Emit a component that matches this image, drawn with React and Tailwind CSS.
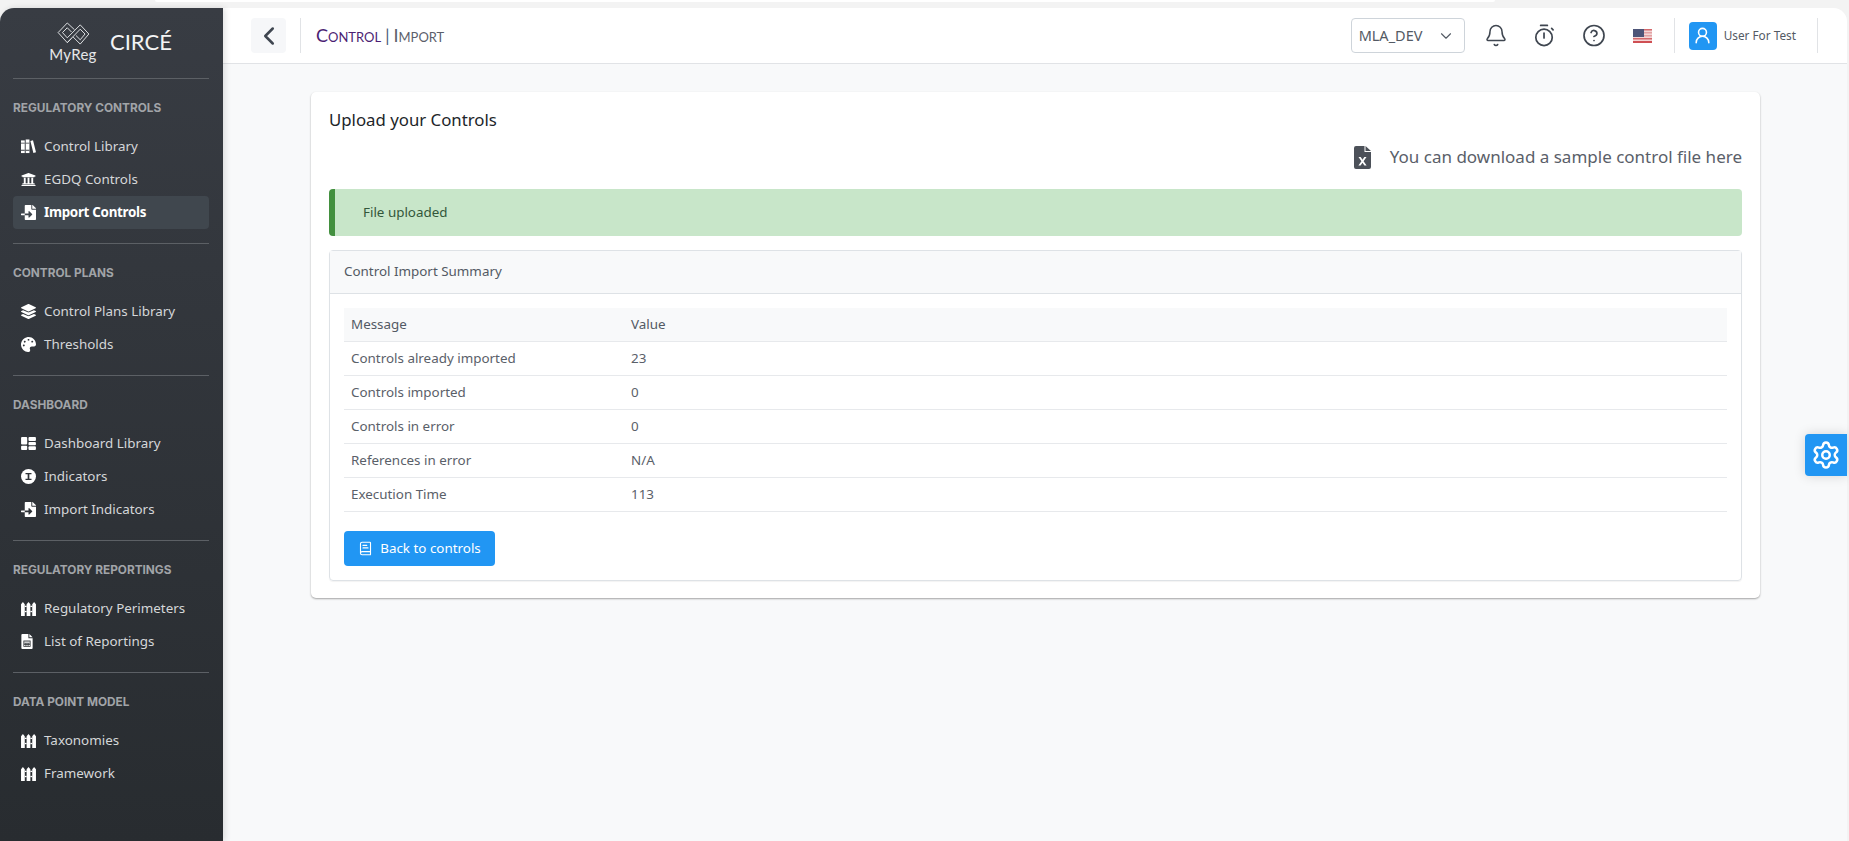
import { FaFileImport, FaLayerGroup, FaPalette, FaUniversity } from 'react-icons/fa'
import { Bell, BookText, ChevronDown, ChevronLeft, CircleHelp, Settings, UserRound } from 'lucide-react'

function BooksIcon() {
  return (
    <svg viewBox="0 0 16 16" className="w-[15px] h-[15px]" fill="currentColor">
      <rect x="0" y="1.500" width="4" height="13.500" />
      <rect x="5" y="0.500" width="4" height="14.500" />
      <path d="M10 2l2.800-.8 3.200 13-2.800.8z" />
      <path d="M0 4h4v.9H0zM5 4h4v.9H5zM0 11.500h4v.9H0zM5 11.500h4v.9H5z" fill="#363a40" />
    </svg>
  )
}

function FenceIcon() {
  return (
    <svg viewBox="0 0 16 15" className="w-[15px] h-[14px]" fill="currentColor">
      <path d="M0 2.500L2 0l2 2.500V15H0zM6 2.500L8 0l2 2.500V15H6zM12 2.500L14 0l2 2.500V15h-4z" />
      <rect x="4" y="4" width="2" height="1.400" />
      <rect x="10" y="4" width="2" height="1.400" />
      <rect x="4" y="9.500" width="2" height="1.400" />
      <rect x="10" y="9.500" width="2" height="1.400" />
    </svg>
  )
}

function TilesIcon() {
  return (
    <svg viewBox="0 0 16 14" className="w-[15px] h-[13px]" fill="currentColor">
      <rect x="0" y="0" width="6.600" height="8" rx="1" />
      <rect x="0" y="9.400" width="6.600" height="4.600" rx="1" />
      <rect x="8" y="0" width="8" height="4.200" rx="1" />
      <rect x="8" y="5.400" width="8" height="3.400" rx="1" />
      <rect x="8" y="10" width="8" height="4" rx="1" />
    </svg>
  )
}

function InfoIcon() {
  return (
    <svg viewBox="0 0 16 16" className="w-[15px] h-[15px]">
      <circle cx="8" cy="8" r="8" fill="currentColor" />
      <path d="M4.800 4.200h6.400v1.400H8.900v4.800h2.300v1.400H4.800v-1.400h2.300V5.600H4.800z" fill="#2f3338" />
    </svg>
  )
}

function SheetIcon() {
  return (
    <svg viewBox="0 0 12 16" className="w-[12px] h-[15px]" fill="currentColor">
      <path d="M1 0h6.500v4.500H12V15a1 1 0 0 1-1 1H1a1 1 0 0 1-1-1V1a1 1 0 0 1 1-1zM8.500 0L12 3.500H8.500z" />
      <rect x="2.200" y="7" width="7.600" height="6.600" fill="#2b2f33" />
      <path d="M3 8h6v1.200H3zM3 10h1.400v1H3zM5.300 10h1.400v1H5.300zM7.600 10H9v1H7.600zM3 11.800h1.400v1H3zM5.300 11.800h1.400v1H5.300zM7.600 11.800H9v1H7.600z" />
    </svg>
  )
}

function ExcelFileIcon() {
  return (
    <svg viewBox="0 0 17 23" className="w-[17px] h-[23px]">
      <path d="M2 0h8.500v6H17v15a2 2 0 0 1-2 2H2a2 2 0 0 1-2-2V2a2 2 0 0 1 2-2zM11.500 0L17 5h-5.500z" fill="#4c5159" />
      <path d="M4.500 11h2.200l1.800 2.700L10.300 11h2.200l-2.900 4.200 3 4.300h-2.200l-1.900-2.800-1.900 2.800H4.400l3-4.300z" fill="#fff" />
    </svg>
  )
}

function StopwatchIcon() {
  return (
    <svg viewBox="0 0 22 24" className="w-[21px] h-[23px]" fill="none" stroke="currentColor" strokeWidth="1.800" strokeLinecap="round">
      <circle cx="10.500" cy="14" r="8.600" />
      <path d="M7 1.500h7" />
      <path d="M10.500 9.500v5" />
      <path d="M18.500 4.500l1.500 1.500" />
    </svg>
  )
}

function MyRegLogo() {
  return (
    <svg viewBox="0 0 34 25" className="w-[33px] h-[24px]" fill="none" stroke="#e5e7e9" strokeWidth="1">
      <path d="M18 8L10.500 1 1 11l9.500 10.500L15 17" />
      <path d="M15 10.500L10.500 6 5.500 11l5 5.500L24 3l9 9.500L24 23l-7.500-7.500" />
      <path d="M19.500 14l4.500 4.500 5-6L24 7.500 10.500 21.500" />
    </svg>
  )
}

function UsFlag() {
  return (
    <svg viewBox="0 0 19 14" className="w-[19px] h-[14px]">
      <rect width="19" height="14" fill="#f3d6d6" />
      <rect y="0" width="19" height="1.500" fill="#d4696c" />
      <rect y="3" width="19" height="1.500" fill="#e3a1a3" />
      <rect y="6" width="19" height="1.500" fill="#e3a1a3" />
      <rect y="9" width="19" height="1.500" fill="#d4696c" />
      <rect y="12" width="19" height="2" fill="#cf4f53" />
      <rect width="11" height="8" fill="#4e5578" />
    </svg>
  )
}

const SECTIONS = [
  {
    title: 'REGULATORY CONTROLS',
    height: 'h-[165px] border-b border-[#5c6065]',
    items: [
      { label: 'Control Library', icon: <BooksIcon /> },
      { label: 'EGDQ Controls', icon: <FaUniversity size={15} /> },
      { label: 'Import Controls', icon: <FaFileImport size={15} />, active: true },
    ],
  },
  {
    title: 'CONTROL PLANS',
    height: 'h-[132px] border-b border-[#5c6065]',
    items: [
      { label: 'Control Plans Library', icon: <FaLayerGroup size={15} /> },
      { label: 'Thresholds', icon: <FaPalette size={15} /> },
    ],
  },
  {
    title: 'DASHBOARD',
    height: 'h-[165px] border-b border-[#5c6065]',
    items: [
      { label: 'Dashboard Library', icon: <TilesIcon /> },
      { label: 'Indicators', icon: <InfoIcon /> },
      { label: 'Import Indicators', icon: <FaFileImport size={15} /> },
    ],
  },
  {
    title: 'REGULATORY REPORTINGS',
    height: 'h-[132px] border-b border-[#5c6065]',
    items: [
      { label: 'Regulatory Perimeters', icon: <FenceIcon /> },
      { label: 'List of Reportings', icon: <SheetIcon /> },
    ],
  },
  {
    title: 'DATA POINT MODEL',
    height: '',
    items: [
      { label: 'Taxonomies', icon: <FenceIcon /> },
      { label: 'Framework', icon: <FenceIcon /> },
    ],
  },
]

const ROWS = [
  ['Controls already imported', '23'],
  ['Controls imported', '0'],
  ['Controls in error', '0'],
  ['References in error', 'N/A'],
  ['Execution Time', '113'],
]

function Sidebar() {
  return (
    <aside className="w-[223px] shrink-0 rounded-tl-[14px] bg-gradient-to-b from-[#383c43] to-[#282c30] pl-[13px] pr-[14px] shadow-[2px_0_6px_rgba(0,0,0,0.12)] z-10">
      <div className="h-[71px] border-b border-[#5c6065] flex items-start pl-[36px]">
        <div className="flex flex-col items-center pt-[14px] w-[48px]">
          <MyRegLogo />
          <span className="text-[15px] leading-[16px] text-[#e5e7e9] font-['Lato',sans-serif] tracking-[0.3px]">MyReg</span>
        </div>
        <span className="ml-[13px] mt-[20px] text-[22px] leading-[28px] text-[#f3f4f5] font-['Lato',sans-serif]">CIRCÉ</span>
      </div>
      {SECTIONS.map((section) => (
        <div key={section.title} className={section.height}>
          <div className="pt-[20px] pb-[13px] text-[11.800px] leading-[18px] font-bold text-[#a1a4a8] font-['Inter',sans-serif]">
            {section.title}
          </div>
          {section.items.map((item) => (
            <div
              key={item.label}
              className={`h-[33px] rounded-[4px] flex items-center text-[13.400px] font-['Noto_Sans',sans-serif] ${
                item.active ? 'bg-[#40474e] text-white font-bold tracking-[-0.3px]' : 'text-[#d5d7d9]'
              }`}
            >
              <span className="w-[31px] pl-[8px] flex justify-start text-white">{item.icon}</span>
              <span>{item.label}</span>
            </div>
          ))}
        </div>
      ))}
    </aside>
  )
}

function Header() {
  return (
    <header className="h-[56px] shrink-0 bg-white border-b border-[#e1e3e6] flex items-center pl-[28px] pr-[29px] rounded-tr-[14px] font-['Noto_Sans',sans-serif]">
      <div className="w-[35px] h-[35px] rounded-[4px] bg-[#f6f7f9] flex items-center justify-center text-[#3f4650]">
        <ChevronLeft size={30} strokeWidth={2} />
      </div>
      <div className="ml-[14px] w-px h-[35px] bg-[#e1e3e6]" />
      <div className="ml-[15px] flex items-baseline text-[#5c5f6b] font-['Lato',sans-serif]">
        <span className="text-[#4b1e73] text-[18px]">C</span>
        <span className="text-[#4b1e73] text-[13px] uppercase">ontrol</span>
        <span className="text-[17px] mx-[4px] text-[#4b5b7a]">|</span>
        <span className="text-[18px]">I</span>
        <span className="text-[13px] uppercase">mport</span>
      </div>
      <div className="flex-1" />
      <div className="w-[114px] h-[35px] rounded-[4px] border border-[#ced4da] flex items-center justify-between pl-[7px] pr-[9px] text-[14.500px] text-[#535a64]">
        <span>MLA_DEV</span>
        <ChevronDown size={18} strokeWidth={1.500} />
      </div>
      <div className="ml-[19px] w-[24px] flex justify-center text-[#3f4650]"><Bell size={25} strokeWidth={1.500} /></div>
      <div className="ml-[25px] w-[24px] flex justify-center text-[#3f4650]"><StopwatchIcon /></div>
      <div className="ml-[25px] w-[24px] flex justify-center text-[#3f4650]"><CircleHelp size={25} strokeWidth={1.700} /></div>
      <div className="ml-[27px]"><UsFlag /></div>
      <div className="ml-[22px] w-px h-[35px] bg-[#e1e3e6]" />
      <div className="ml-[14px] w-[28px] h-[28px] rounded-[4px] bg-[#2196f3] flex items-center justify-center text-white">
        <UserRound size={19} strokeWidth={2} />
      </div>
      <span className="ml-[7px] text-[11.800px] text-[#535a64]">User For Test</span>
      <div className="ml-[21px] w-px h-[35px] bg-[#e1e3e6]" />
    </header>
  )
}

function SummaryCard() {
  return (
    <div className="mt-[14px] rounded-[4px] border border-[#dee2e6] shadow-[0_1px_1px_rgba(0,0,0,0.05)]">
      <div className="h-[43px] bg-[#f8f9fa] border-b border-[#dee2e6] flex items-center px-[14px] pb-[2px] text-[13.400px] text-[#535a64]">
        Control Import Summary
      </div>
      <div className="p-[14px]">
        <div className="h-[34px] bg-[#f8f9fa] border-b border-[#e7e9ec] grid grid-cols-[280px_1fr] items-center px-[7px] text-[13.400px] text-[#535a64]">
          <span>Message</span>
          <span>Value</span>
        </div>
        {ROWS.map(([label, value]) => (
          <div key={label} className="h-[34px] border-b border-[#e7e9ec] grid grid-cols-[280px_1fr] items-center px-[7px] text-[13.400px] text-[#5a6069]">
            <span>{label}</span>
            <span>{value}</span>
          </div>
        ))}
        <button className="mt-[19px] h-[35px] w-[151px] rounded-[4px] bg-[#2196f3] text-white text-[13.400px] flex items-center justify-center gap-[7px]">
          <BookText size={15} strokeWidth={1.800} />
          Back to controls
        </button>
      </div>
    </div>
  )
}

export default function App() {
  return (
    <div className="relative h-[841px] overflow-hidden bg-[#f3f3f3] pt-[8px] pr-[2px]">
      <div className="absolute top-0 left-[155px] w-[1340px] h-[2px] rounded-b-[6px] bg-white" />
      <div className="h-[833px] flex rounded-tl-[14px] rounded-tr-[14px] bg-[#f8f9fa]">
        <Sidebar />
        <div className="flex-1 flex flex-col min-w-0">
          <Header />
          <main className="relative flex-1 pt-[28px] pl-[88px] pr-[87px] font-['Noto_Sans',sans-serif]">
            <section className="h-[506px] rounded-[5px] bg-white px-[18px] pt-[16px] shadow-[0_1px_2px_rgba(0,0,0,0.35)]">
              <h2 className="text-[16.800px] leading-[24px] text-[#212529]">Upload your Controls</h2>
              <div className="mt-[11px] h-[28px] flex items-center justify-end text-[#5a6069] text-[17px]">
                <ExcelFileIcon />
                <span className="ml-[19px]">You can download a sample control file here</span>
              </div>
              <div className="mt-[18px] h-[47px] rounded-[4px] bg-[#c8e6c9] border-l-[6px] border-[#43903f] flex items-center pl-[28px] text-[13.400px] text-[#33573a]">
                File uploaded
              </div>
              <SummaryCard />
            </section>
            <div className="absolute right-0 top-[370px] w-[42px] h-[42px] rounded-l-[4px] bg-[#2196f3] flex items-center justify-center text-white shadow-[0_0_12px_rgba(0,0,0,0.15)]">
              <Settings size={30} strokeWidth={2} />
            </div>
          </main>
        </div>
      </div>
    </div>
  )
}
